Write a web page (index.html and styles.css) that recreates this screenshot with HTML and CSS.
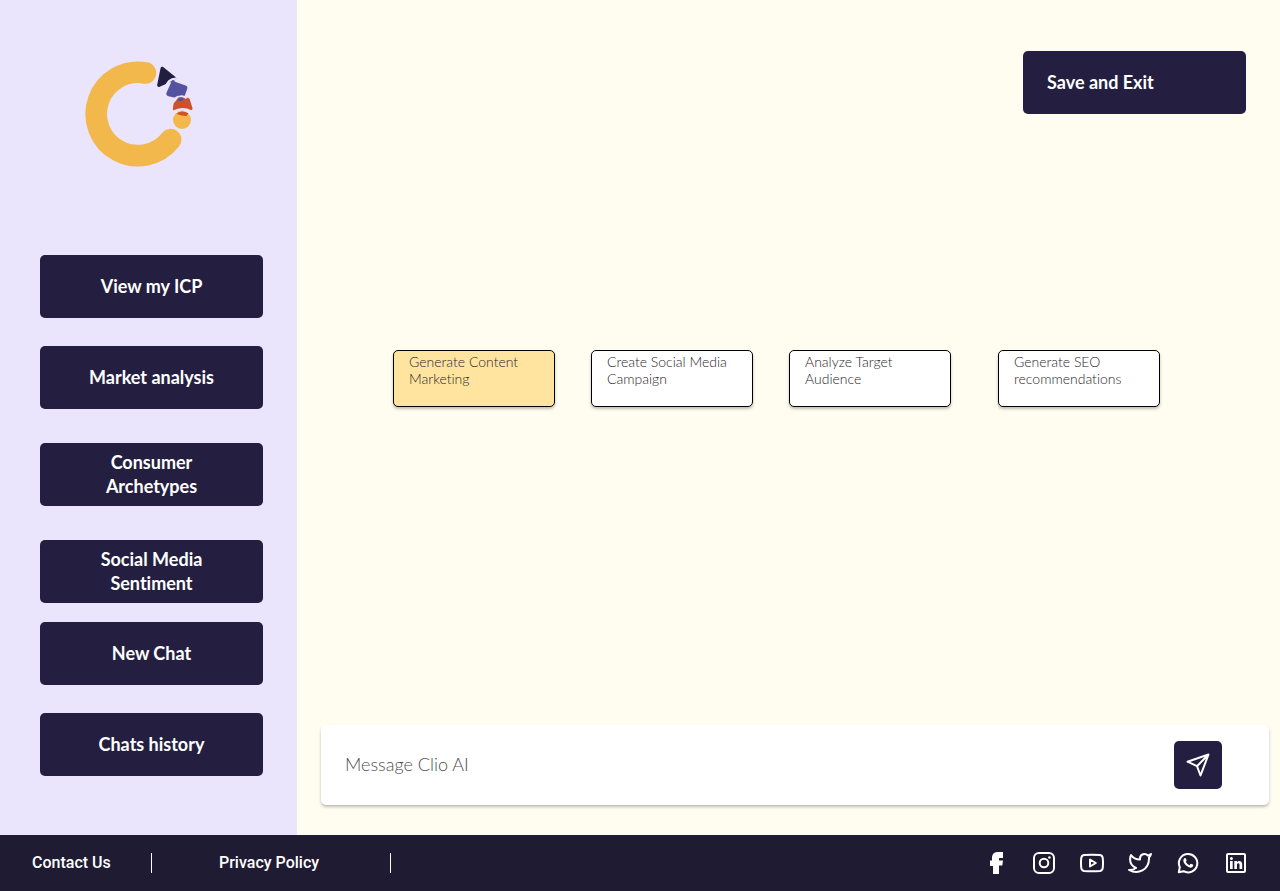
FILE: index.html
```html
<!DOCTYPE html>
<html lang="en">
<head>
<meta charset="utf-8">
<meta name="viewport" content="width=device-width, initial-scale=1">
<title>Clio AI</title>
<link rel="stylesheet" href="styles.css">
</head>
<body>
<div class="page">
  <aside class="sidebar">
    <svg class="logo" viewBox="45 32 324 318" role="img" aria-label="Clio">
      <path d="M226 68A125 125 0 1 0 302 268" fill="none" stroke="#f2b84b" stroke-width="65" stroke-linecap="round"/>
      <path d="M277 55L313 84L267 104Z" fill="#211e40" stroke="#211e40" stroke-width="11" stroke-linejoin="round"/>
      <path d="M287 110C293 96 299 85 318 85" fill="none" stroke="#eae4fc" stroke-width="7"/>
      <path d="M302 98Q306 88 318 96L312 102Z" fill="#211e40"/>
      <path d="M310 101L344 113L335 138L297 130Z" fill="#5552a0" stroke="#5552a0" stroke-width="16" stroke-linejoin="round"/>
      <path d="M328 149L353 149L361 174L315 176L317 162Z" fill="#cf5128" stroke="#cf5128" stroke-width="13" stroke-linejoin="round"/>
      <path d="M307 156Q318 138 331 138Q342 137 350 144" fill="none" stroke="#eae4fc" stroke-width="6"/>
      <path d="M321 149Q330 137 341 144Q339 153 330 153Q325 153 321 149Z" fill="#5552a0"/>
      <circle cx="336" cy="209" r="27" fill="#f2b84b"/>
      <path d="M310 185Q336 170 364 184" fill="none" stroke="#eae4fc" stroke-width="8"/>
      <path d="M319 190Q336 178 355 189L350 197Q335 197 319 190Z" fill="#cf5128"/>
    </svg>
    <nav class="menu" aria-label="Tools">
      <button class="btn" type="button">View my ICP</button>
      <button class="btn" type="button">Market analysis</button>
      <button class="btn btn-spaced" type="button">Consumer<br>Archetypes</button>
      <button class="btn btn-spaced" type="button">Social Media<br>Sentiment</button>
      <button class="btn btn-close" type="button">New Chat</button>
      <button class="btn" type="button">Chats history</button>
    </nav>
  </aside>
  <main class="main">
    <button class="btn save" type="button">Save and Exit</button>
    <div class="cards">
      <button class="card card-active" type="button">Generate Content Marketing</button>
      <button class="card" type="button">Create Social Media Campaign</button>
      <button class="card" type="button">Analyze Target Audience</button>
      <button class="card card-last" type="button">Generate SEO recommendations</button>
    </div>
    <form class="composer">
      <input class="message" type="text" placeholder="Message Clio AI" aria-label="Message Clio AI">
      <button class="send" type="button" aria-label="Send">
        <svg class="icon" viewBox="0 0 24 24"><path d="M1.500 8.700L22.500 1.500L14.500 22.500L11 13.200ZM11 13.200L22.500 1.500" fill="none" stroke="#fff" stroke-width="2" stroke-linejoin="round"/></svg>
      </button>
    </form>
  </main>
  <footer class="footer">
    <div class="link-cell"><a class="link" href="#contact">Contact Us</a></div>
    <div class="link-cell link-cell-wide"><a class="link" href="#privacy">Privacy Policy</a></div>
    <div class="social">
      <a href="#facebook" aria-label="Facebook"><svg class="icon" viewBox="0 0 24 24"><path d="M9 23V15H6V9.500H8V6Q8.500 1.500 13 1H19V7H15.500Q15 7 15 8V9.500H19L18.300 14.500H15V23Z" fill="#fff"/></svg></a>
      <a href="#instagram" aria-label="Instagram"><svg class="icon" viewBox="0 0 24 24"><g fill="none" stroke="#fff" stroke-width="2"><rect x="2" y="2" width="20" height="20" rx="5"/><circle cx="12" cy="12" r="4.300"/></g><circle cx="17.400" cy="6.500" r="1.300" fill="#fff"/></svg></a>
      <a href="#youtube" aria-label="YouTube"><svg class="icon" viewBox="0 0 24 24"><g fill="none" stroke="#fff" stroke-width="2" stroke-linejoin="round"><path d="M4 4Q12 3.400 20 4Q22.600 4.400 22.800 7.500Q23.200 12 22.800 16.500Q22.600 19.500 20 20Q12 20.600 4 20Q1.400 19.500 1.200 16.500Q.8 12 1.200 7.500Q1.400 4.400 4 4Z"/><path d="M10 8.500V15.500L15.800 12Z"/></g></svg></a>
      <a href="#twitter" aria-label="Twitter"><svg class="icon" viewBox="0 0 24 24"><path d="M23 3a10.900 10.900 0 0 1-3.140 1.530 4.480 4.480 0 0 0-7.860 3v1A10.660 10.660 0 0 1 3 4s-4 9 5 13a11.640 11.640 0 0 1-7 2c9 5 20 0 20-11.500a4.500 4.500 0 0 0-.08-.83A7.720 7.720 0 0 0 23 3z" fill="none" stroke="#fff" stroke-width="2" stroke-linejoin="round"/></svg></a>
      <a href="#whatsapp" aria-label="WhatsApp"><svg class="icon" viewBox="0 0 24 24"><path d="M3.800 16.200A9.200 9.200 0 1 1 7.500 20.200L2.800 21.300Z" fill="none" stroke="#fff" stroke-width="2" stroke-linejoin="round"/><path d="M8.200 7.300Q9.300 6.500 9.900 7.600L10.600 9.300Q10.700 9.900 9.800 10.800Q11 13.200 13.400 14.200L14.500 12.900Q15 12.600 15.500 12.900L17.300 13.800Q17.400 15.700 16 16.300Q13.500 17.600 9.800 14.200Q5.800 10.200 8.200 7.300Z" fill="#fff"/></svg></a>
      <a href="#linkedin" aria-label="LinkedIn"><svg class="icon" viewBox="0 0 24 24"><rect x="3" y="3" width="18" height="18" rx="1" fill="none" stroke="#fff" stroke-width="2"/><circle cx="7.400" cy="7.400" r="1.500" fill="#fff"/><path d="M6 10H8.700V18H6ZM10.300 10H12.900V11.100C14.500 9 18.200 9.600 18.200 13.200V18H15.500V13.700C15.500 11.600 13 11.700 13 13.700V18H10.300Z" fill="#fff"/></svg></a>
    </div>
  </footer>
</div>
</body>
</html>
```
FILE: styles.css
```css
* {
  box-sizing: border-box;
}

body {
  margin: 0;
  font-family: Lato, "Open Sans", sans-serif;
  font-variant-ligatures: none;
}

button,
input {
  font-family: inherit;
  font-variant-ligatures: inherit;
}

.page {
  display: grid;
  grid-template-columns: 297px 1fr;
  grid-template-rows: 1fr auto;
  min-height: 100vh;
  background: #fffdf0;
}

.sidebar {
  padding: 61px 34px 48px 40px;
  background: #eae4fc;
}

.logo {
  display: block;
  width: 108px;
  margin: 0 0 88px 45px;
}

.menu {
  display: flex;
  flex-direction: column;
}

.btn {
  min-height: 63px;
  padding: 0 24px 2px;
  border: 0;
  border-radius: 5px;
  background: #241f40;
  color: #fff;
  font-size: 18px;
  font-weight: 700;
  line-height: 24px;
  cursor: pointer;
}

.btn + .btn {
  margin-top: 28px;
}

.btn + .btn-spaced {
  margin-top: 34px;
}

.btn + .btn-close {
  margin-top: 19px;
}

.main {
  display: flex;
  flex-direction: column;
  padding: 51px 11px 30px 24px;
}

.save {
  align-self: flex-end;
  width: 223px;
  margin-right: 23px;
  text-align: left;
}

.cards {
  display: flex;
  flex-wrap: wrap;
  gap: 36px;
  margin: 236px 0 48px 72px;
}

.card {
  display: flex;
  align-items: flex-start;
  width: 162px;
  min-height: 57px;
  padding: 2px 15px;
  border: 1px solid #000;
  border-radius: 5px;
  background: #fff;
  box-shadow: 0 2px 3px rgba(0, 0, 0, 0.25);
  color: #2b2629;
  font-size: 14px;
  font-weight: 300;
  line-height: 17px;
  text-align: left;
  cursor: pointer;
}

.card-active {
  background: #ffe4a0;
}

.card-last {
  margin-left: 11px;
}

.composer {
  display: flex;
  align-items: center;
  height: 80px;
  margin-top: auto;
  padding: 0 47px 0 24px;
  border-radius: 5px;
  background: #fff;
  box-shadow: 0 2px 3px rgba(0, 0, 0, 0.25);
}

.message {
  flex: 1;
  min-width: 0;
  height: 48px;
  padding: 0 0 2px;
  border: 0;
  background: transparent;
  color: #504e52;
  font-size: 18px;
  font-weight: 300;
}

.message::placeholder {
  color: #504e52;
  opacity: 1;
}

.send {
  display: grid;
  place-items: center;
  width: 48px;
  height: 48px;
  padding: 0;
  border: 0;
  border-radius: 5px;
  background: #241f40;
  cursor: pointer;
}

.icon {
  display: block;
  width: 24px;
  height: 24px;
}

.footer {
  grid-column: 1 / -1;
  display: flex;
  align-items: center;
  min-height: 56px;
  padding: 0 32px;
  background: #1f1b32;
  font-family: Roboto, sans-serif;
}

.link-cell {
  width: 120px;
  border-right: 1px solid #fff;
  line-height: 20px;
}

.link-cell-wide {
  width: 239px;
  padding-left: 67px;
}

.link {
  color: #fff;
  font-size: 16px;
  font-weight: 500;
  text-decoration: none;
}

.social {
  display: flex;
  gap: 24px;
  margin-left: auto;
}
```
